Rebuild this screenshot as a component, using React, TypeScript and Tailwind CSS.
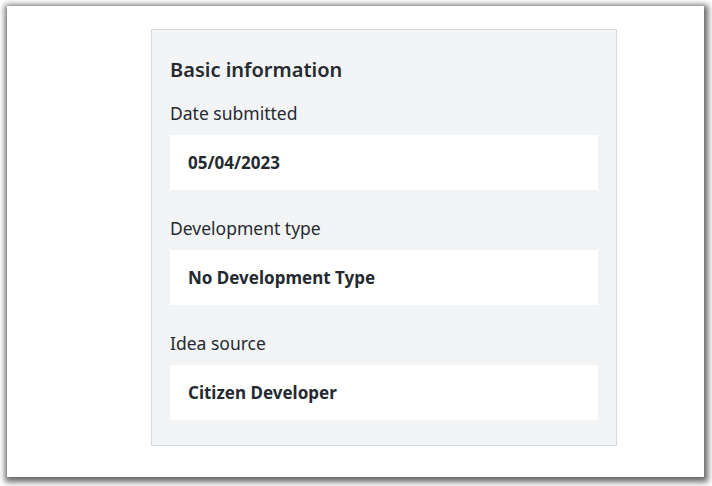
export default function App() {
  const fields = [
    { label: "Date submitted", value: "05/04/2023" },
    { label: "Development type", value: "No Development Type" },
    { label: "Idea source", value: "Citizen Developer" },
  ];

  return (
    <div className="h-[486px] w-[712px] bg-white pt-[6px] pl-[7px] font-['Noto_Sans',sans-serif] text-[#252a31]">
      <div className="h-[471px] w-[697px] bg-white pt-[23px] pl-[144px] shadow-[1px_2px_6px_3px_rgba(0,0,0,0.6)]">
        <div className="w-[466px] border border-[#d6dade] bg-[#f3f4f6] px-[18px] pt-[26px] pb-[25px]">
          <h2 className="mb-[17px] text-[20px] font-semibold leading-[28px]">Basic information</h2>
          <div className="flex flex-col gap-[26px]">
            {fields.map((f) => (
              <div key={f.label}>
                <div className="mb-[10px] text-[17.5px] leading-[24px]">{f.label}</div>
                <div className="flex h-[55px] items-center bg-white px-[18px] text-[17px] font-bold">
                  {f.value}
                </div>
              </div>
            ))}
          </div>
        </div>
      </div>
    </div>
  );
}
